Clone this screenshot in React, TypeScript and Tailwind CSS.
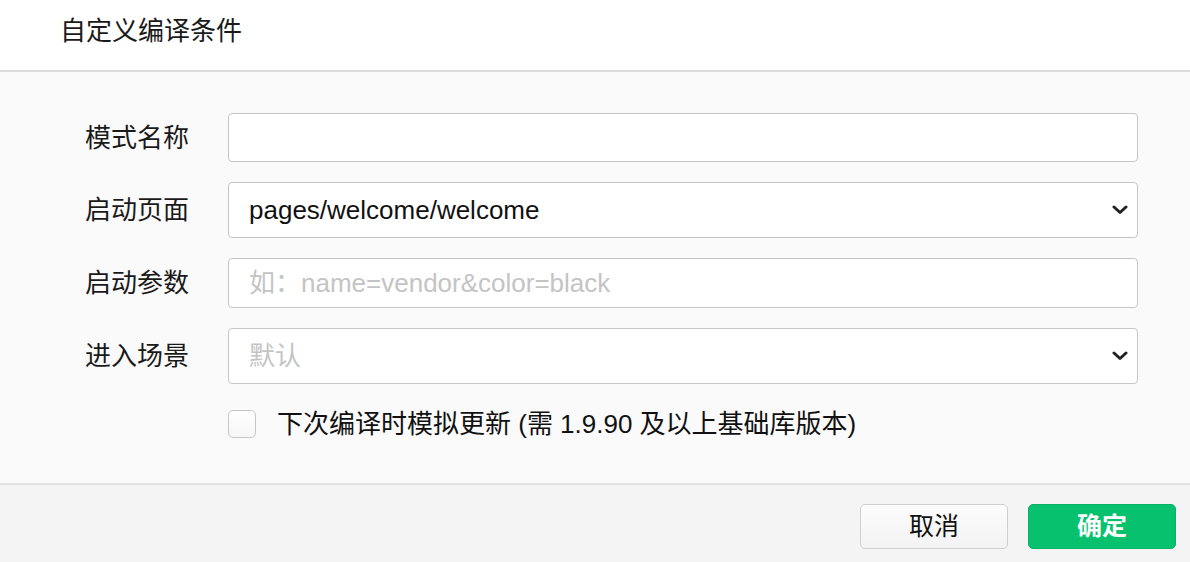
import React from "react";

const font = { fontFamily: '"Liberation Sans", "Noto Sans CJK SC", sans-serif' };

function Chevron() {
  return (
    <svg width="16" height="10" viewBox="0 0 16 10" className="absolute right-[9px] top-1/2 -translate-y-1/2">
      <path d="M2 2 L8 7.5 L14 2" fill="none" stroke="#222" strokeWidth="3" strokeLinecap="round" strokeLinejoin="round" />
    </svg>
  );
}

export default function App() {
  return (
    <div className="w-[1190px] h-[562px] flex flex-col bg-white text-[#1a1a1a] overflow-hidden" style={font}>
      <div className="h-[70px] shrink-0 flex items-center pl-[60px] pb-[8px] text-[26px] bg-white">自定义编译条件</div>
      <div className="h-[2px] bg-[#dcdcdc] shrink-0" />
      <div className="flex-1 bg-[#fafafa] pl-[85px] pr-[52px] pt-[41px] flex flex-col">
        <div className="flex items-center">
          <div className="w-[143px] text-[26px] leading-none">模式名称</div>
          <div className="flex-1 h-[49px] border border-[#c6c6c6] rounded-[4px] bg-white" />
        </div>
        <div className="flex items-center mt-[20px]">
          <div className="w-[143px] text-[26px] leading-none">启动页面</div>
          <div className="relative flex-1 h-[56px] border border-[#c6c6c6] rounded-[4px] bg-white flex items-center pl-[20px] text-[26px] text-[#111]">
            pages/welcome/welcome
            <Chevron />
          </div>
        </div>
        <div className="flex items-center mt-[20px]">
          <div className="w-[143px] text-[26px] leading-none">启动参数</div>
          <div className="flex-1 h-[50px] border border-[#c6c6c6] rounded-[4px] bg-white flex items-center pl-[20px] text-[26px] text-[#c4c4c4]">
            如：name=vendor&amp;color=black
          </div>
        </div>
        <div className="flex items-center mt-[20px]">
          <div className="w-[143px] text-[26px] leading-none">进入场景</div>
          <div className="relative flex-1 h-[56px] border border-[#c6c6c6] rounded-[4px] bg-white flex items-center pl-[20px] text-[26px] text-[#c4c4c4]">
            默认
            <Chevron />
          </div>
        </div>
        <div className="flex items-center mt-[26px] pl-[143px]">
          <div className="w-[28px] h-[28px] border border-[#c6c6c6] rounded-[5px] bg-gradient-to-b from-white to-[#f6f6f6] shrink-0" />
          <div className="ml-[21px] text-[26px] leading-none text-[#111]">下次编译时模拟更新 (需 1.9.90 及以上基础库版本)</div>
        </div>
      </div>
      <div className="h-[2px] bg-[#e2e2e2] shrink-0" />
      <div className="h-[77px] shrink-0 bg-[#f4f4f4] flex items-start justify-end pt-[19px] pr-[14px] gap-[20px]">
        <button className="w-[148px] h-[45px] rounded-[5px] border border-[#cfcfcf] bg-gradient-to-b from-[#fcfcfc] to-[#f3f3f3] text-[25px] text-[#111] flex items-center justify-center" style={font}>
          取消
        </button>
        <button className="w-[148px] h-[45px] rounded-[5px] border border-[#06b264] bg-[#07c16f] text-[25px] font-bold text-white flex items-center justify-center" style={font}>
          确定
        </button>
      </div>
    </div>
  );
}
